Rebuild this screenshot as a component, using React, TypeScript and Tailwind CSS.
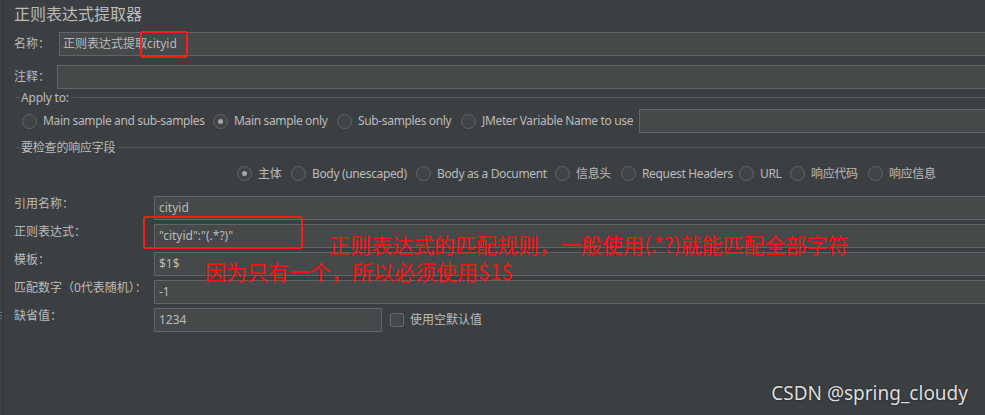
import React from "react"

const FONT = "[font-family:'Noto_Sans','Noto_Sans_CJK_SC',sans-serif]"
const FIELD =
  "h-[24px] bg-[#45494a] border border-[#646464] flex items-center pl-[3px] text-[12px] text-[#bbbbbb] whitespace-nowrap overflow-hidden"

function Radio({ label, checked = false, w }: { label: string; checked?: boolean; w: string }) {
  return (
    <div className={`flex items-center shrink-0 ${w}`}>
      <span className="w-[15px] h-[15px] rounded-full border border-[#626567] bg-[#404445] flex items-center justify-center shrink-0">
        {checked && <span className="w-[5px] h-[5px] rounded-full bg-[#a8a8a8]" />}
      </span>
      <span className="ml-[6px] whitespace-nowrap leading-none tracking-[-0.35px]">{label}</span>
    </div>
  )
}

function Legend({ title }: { title: string }) {
  return (
    <div className="h-[17px] flex items-center ml-[2px]">
      <span className="w-[4px] h-px bg-[#55595b]" />
      <span className="ml-[1px] leading-none whitespace-nowrap tracking-[-0.2px]">{title}</span>
      <span className="ml-[4px] flex-1 h-px bg-[#55595b]" />
    </div>
  )
}

const ROW1 = [
  { label: "Main sample and sub-samples", w: "w-[191px]" },
  { label: "Main sample only", w: "w-[124px]", checked: true },
  { label: "Sub-samples only", w: "w-[124px]" },
  { label: "JMeter Variable Name to use", w: "w-[178px]" },
]

const ROW2 = [
  { label: "主体", w: "w-[54px]", checked: true },
  { label: "Body (unescaped)", w: "w-[125px]" },
  { label: "Body as a Document", w: "w-[139px]" },
  { label: "信息头", w: "w-[66px]" },
  { label: "Request Headers", w: "w-[118px]" },
  { label: "URL", w: "w-[51px]" },
  { label: "响应代码", w: "w-[78px]" },
  { label: "响应信息", w: "w-[80px]" },
]

const FIELDS = [
  { label: "引用名称：", value: "cityid" },
  { label: "正则表达式：", value: "\"cityid\":\"(.*?)\"" },
  { label: "模板：", value: "$1$" },
  { label: "匹配数字（0代表随机）：", value: "-1" },
]

export default function App() {
  return (
    <div className={`relative w-[985px] h-[415px] overflow-hidden bg-[#3c3f41] text-[#bbbbbb] text-[12px] flex ${FONT}`}>
      <div className="w-[3px] shrink-0" />
      <div className="w-px h-full bg-[#313335] shrink-0" />

      <div className="flex-1 flex flex-col pl-[10px]">
        {/* title */}
        <div className="h-[28px] flex items-center text-[16px] leading-none">正则表达式提取器</div>

        <div className="mt-[4px] flex">
          <div className="w-[45px] flex items-center leading-none">名称：</div>
          <div className={`${FIELD} flex-1 border-r-0`}>正则表达式提取cityid</div>
        </div>

        <div className="mt-[9px] flex">
          <div className="w-[43px] flex items-center leading-none">注释：</div>
          <div className={`${FIELD} flex-1 border-r-0`} />
        </div>

        {/* Apply to */}
        <Legend title="Apply to:" />
        <div className="mt-[3px] flex h-[24px] items-center pl-[8px]">
          {ROW1.map(r => (
            <Radio key={r.label} label={r.label} w={r.w} checked={r.checked} />
          ))}
          <div className={`${FIELD} flex-1 border-r-0`} />
        </div>

        {/* fields to check */}
        <div className="mt-[6px]">
          <Legend title="要检查的响应字段" />
        </div>
        <div className="mt-[5px] flex h-[24px] items-center pt-[1px] pl-[223px]">
          {ROW2.map(r => (
            <Radio key={r.label} label={r.label} w={r.w} checked={r.checked} />
          ))}
        </div>

        <div className="mt-[11px] flex flex-col gap-[4px]">
          {FIELDS.map(f => (
            <div key={f.label} className="flex">
              <div className="w-[140px] flex items-center pb-[8px] leading-none whitespace-nowrap">{f.label}</div>
              <div className={`${FIELD} flex-1 border-r-0 pl-[4px]`}>{f.value}</div>
            </div>
          ))}
          <div className="flex">
            <div className="w-[140px] flex items-center pb-[8px] leading-none">缺省值：</div>
            <div className={`${FIELD} w-[228px] pl-[4px]`}>1234</div>
            <span className="ml-[8px] self-center w-[14px] h-[14px] rounded-[2px] border border-[#65686a] bg-[#43494a]" />
            <span className="ml-[6px] self-center leading-none">使用空默认值</span>
          </div>
        </div>
      </div>

      {/* grip on the splitter */}
      <div className="absolute left-0 top-[312px] flex flex-col gap-[2px]">
        <span className="w-[2px] h-[1px] bg-[#6b6e70]" />
        <span className="w-[2px] h-[1px] bg-[#6b6e70]" />
        <span className="w-[2px] h-[1px] bg-[#6b6e70]" />
      </div>

      {/* annotations */}
      <div className="absolute left-[140px] top-[31px] w-[48px] h-[27px] border-2 border-[#ff1a1a] rounded-[3px]" />
      <div className="absolute left-[143px] top-[216px] w-[160px] h-[33px] border-2 border-[#ff1a1a] rounded-[3px]" />
      <div className="absolute left-[329px] top-[234px] text-[21px] leading-[21px] text-[#ff1010] whitespace-nowrap [font-family:'Noto_Sans_CJK_SC',sans-serif]">
        正则表达式的匹配规则，一般使用(.*?)就能匹配全部字符
      </div>
      <div className="absolute left-[205px] top-[261px] text-[21px] leading-[21px] text-[#ff1010] whitespace-nowrap [font-family:'Noto_Sans_CJK_SC',sans-serif]">
        因为只有一个，所以必须使用$1$
      </div>

      {/* watermark */}
      <div className="absolute right-[17px] top-[381px] text-[19px] leading-[24px] text-[#dedede] whitespace-nowrap [font-family:'Noto_Sans',sans-serif] [text-shadow:0_0_2px_rgba(0,0,0,0.7)]">
        CSDN @spring_cloudy
      </div>
    </div>
  )
}
